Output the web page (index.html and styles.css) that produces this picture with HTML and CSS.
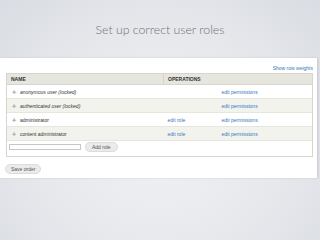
FILE: index.html
```html
<!DOCTYPE html>
<html>
<head>
    <title>Set up correct user roles</title>
    <link rel="stylesheet" href="styles.css">
</head>
<body>
    <h1 class="title">Set up correct user roles</h1>
    <div class="panel">
        <div class="weights"><a href="#">Show row weights</a></div>
        <div class="roles">
            <table class="roles-table">
                <thead>
                    <tr>
                        <th class="col-name">NAME</th>
                        <th colspan="2">OPERATIONS</th>
                    </tr>
                </thead>
                <tbody>
                    <tr>
                        <td class="col-name"><span class="handle">&#10010;</span><em>anonymous user (locked)</em></td>
                        <td class="col-op"></td>
                        <td><a href="#">edit permissions</a></td>
                    </tr>
                    <tr class="even">
                        <td class="col-name"><span class="handle">&#10010;</span><em>authenticated user (locked)</em></td>
                        <td class="col-op"></td>
                        <td><a href="#">edit permissions</a></td>
                    </tr>
                    <tr>
                        <td class="col-name"><span class="handle">&#10010;</span>administrator</td>
                        <td class="col-op"><a href="#">edit role</a></td>
                        <td><a href="#">edit permissions</a></td>
                    </tr>
                    <tr class="even">
                        <td class="col-name"><span class="handle">&#10010;</span>content administrator</td>
                        <td class="col-op"><a href="#">edit role</a></td>
                        <td><a href="#">edit permissions</a></td>
                    </tr>
                </tbody>
            </table>
            <div class="add-row">
                <input type="text" class="role-input">
                <button type="button" class="btn">Add role</button>
            </div>
        </div>
        <button type="button" class="btn btn-save">Save order</button>
    </div>
</body>
</html>
```

FILE: styles.css
```css
body {
    margin: 0;
    width: 320px;
    height: 240px;
    overflow: hidden;
    font-family: "Liberation Sans", Arial, sans-serif;
    background: radial-gradient(ellipse at 50% 60%, #f0f1f4 0%, #e6e8ec 55%, #d9dce2 100%);
}
.title {
    margin: 0;
    padding-top: 22px;
    height: 36px;
    box-sizing: border-box;
    text-align: center;
    font-family: Lato, "Open Sans", sans-serif;
    font-weight: 300;
    font-size: 12.3px;
    color: #6f727a;
}
.panel {
    margin-top: 22px;
    width: 317px;
    height: 120px;
    box-sizing: border-box;
    padding: 6px 4px 0 6px;
    background-color: #fff;
    box-shadow: 1px 0 2px rgba(0, 0, 0, 0.12);
}
a {
    color: #3478c0;
    text-decoration: none;
}
.weights {
    text-align: right;
    font-size: 5px;
    height: 9px;
    line-height: 9px;
}
.roles {
    border: 1px solid #d6d6d0;
    height: 84px;
    box-sizing: border-box;
}
.roles-table {
    width: 100%;
    border-collapse: collapse;
    font-size: 5px;
    color: #333;
}
.roles-table th {
    background-color: #e6e6df;
    text-align: left;
    font-weight: bold;
    height: 10px;
    padding: 0 0 0 4px;
    border-bottom: 1px solid #d6d6d0;
}
.roles-table th.col-name {
    width: 152px;
    border-right: 1px solid #d6d6d0;
}
.roles-table td {
    height: 13px;
    padding: 0 0 0 4px;
    border-bottom: 1px solid #e6e6e0;
}
.roles-table td.col-op {
    width: 50px;
}
.roles-table tr.even td {
    background-color: #f3f3ee;
}
.handle {
    color: #b0b0b0;
    font-size: 5px;
    margin-right: 4px;
    margin-left: 1px;
}
.add-row {
    display: flex;
    align-items: center;
    gap: 4px;
    padding: 1px 0 0 2px;
}
.role-input {
    width: 72px;
    height: 6px;
    padding: 0;
    margin: 0;
    border: 1px solid #c8c8c8;
    box-sizing: border-box;
}
.btn {
    font-family: "Liberation Sans", Arial, sans-serif;
    font-size: 5px;
    color: #555;
    background-color: #ebebeb;
    border: 1px solid #dcdcdc;
    border-radius: 5px;
    height: 10px;
    padding: 0 6px;
    line-height: 8px;
}
.btn-save {
    margin-top: 5px;
    margin-left: -1px;
    padding: 0 5px;
}
```
